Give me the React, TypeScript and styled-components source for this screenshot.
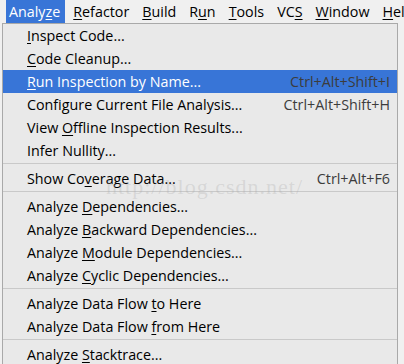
import React from 'react';
import styled, { createGlobalStyle } from 'styled-components';

const GlobalStyle = createGlobalStyle`
    body {
        margin: 0;
        background: #f0f0f0;
        font-family: "Open Sans", "Noto Sans", sans-serif;
    }
`

const Page = styled.div`
    position: relative;
    width: 404px;
    height: 364px;
    overflow: hidden;
    background: #f0f0f0;
`
const MenuBar = styled.div`
    display: flex;
    height: 23px;
    padding-left: 6px;
    font-size: 14.3px;
    color: #000;
`
const MenuTitle = styled.div<{ $active?: boolean }>`
    display: flex;
    align-items: center;
    padding: 0 5px 0 3px;
    margin-right: 5px;
    white-space: nowrap;
    background: ${p => p.$active ? '#3875d7' : 'transparent'};
    color: ${p => p.$active ? '#fff' : '#000'};
`
const Popup = styled.div`
    margin-left: 2px;
    width: 394px;
    border: 1px solid #a9a9a9;
    background: #e9e9e9;
    font-size: 14.3px;
`
const Item = styled.div<{ $selected?: boolean }>`
    display: flex;
    align-items: center;
    justify-content: space-between;
    height: 23px;
    padding: 0 7px 0 24px;
    white-space: nowrap;
    background: ${p => p.$selected ? '#3875d7' : 'transparent'};
    color: ${p => p.$selected ? '#fff' : '#000'};
`
const Shortcut = styled.span`
    color: #3c3c3c;
`
const Separator = styled.div`
    height: 4px;
    border-top: 1px solid #c9c9c9;
    margin-top: 1px;
    box-sizing: border-box;
`
const Mn = styled.span`
    text-decoration: underline;
    text-underline-offset: 2px;
`
const Watermark = styled.div`
    position: absolute;
    left: 106px;
    top: 174px;
    font-family: "Liberation Serif", serif;
    font-size: 22px;
    letter-spacing: 1px;
    color: rgba(170, 170, 170, 0.3);
    pointer-events: none;
`

type Entry = { pre: string, mn?: string, post?: string, shortcut?: string, selected?: boolean } | 'sep';

const entries: Entry[] = [
    { pre: '', mn: 'I', post: 'nspect Code...' },
    { pre: '', mn: 'C', post: 'ode Cleanup...' },
    { pre: '', mn: 'R', post: 'un Inspection by Name...', shortcut: 'Ctrl+Alt+Shift+I', selected: true },
    { pre: 'Configure Current File Analysis...', shortcut: 'Ctrl+Alt+Shift+H' },
    { pre: 'View ', mn: 'O', post: 'ffline Inspection Results...' },
    { pre: 'Infer Nullity...' },
    'sep',
    { pre: 'Show Co', mn: 'v', post: 'erage Data...', shortcut: 'Ctrl+Alt+F6' },
    'sep',
    { pre: 'Analyze ', mn: 'D', post: 'ependencies...' },
    { pre: 'Analyze ', mn: 'B', post: 'ackward Dependencies...' },
    { pre: 'Analyze ', mn: 'M', post: 'odule Dependencies...' },
    { pre: 'Analyze ', mn: 'C', post: 'yclic Dependencies...' },
    'sep',
    { pre: 'Analyze Data Flow ', mn: 't', post: 'o Here' },
    { pre: 'Analyze Data Flow ', mn: 'f', post: 'rom Here' },
    'sep',
    { pre: 'Analyze ', mn: 'S', post: 'tacktrace...' },
];

const menus: [string, string, string][] = [
    ['Analy', 'z', 'e'],
    ['', 'R', 'efactor'],
    ['', 'B', 'uild'],
    ['R', 'u', 'n'],
    ['', 'T', 'ools'],
    ['VC', 'S', ''],
    ['', 'W', 'indow'],
    ['', 'H', 'elp'],
];

const App: React.FC = () => {
    return (
        <Page>
            <GlobalStyle />
            <MenuBar>
                {menus.map(([a, m, b], i) => (
                    <MenuTitle key={i} $active={i === 0}>
                        {a}<Mn>{m}</Mn>{b}
                    </MenuTitle>
                ))}
            </MenuBar>
            <Popup>
                {entries.map((e, i) => e === 'sep'
                    ? <Separator key={i} />
                    : (
                        <Item key={i} $selected={e.selected}>
                            <span>{e.pre}{e.mn && <Mn>{e.mn}</Mn>}{e.post}</span>
                            {e.shortcut && <Shortcut>{e.shortcut}</Shortcut>}
                        </Item>
                    ))}
            </Popup>
            <Watermark>http://blog.csdn.net/</Watermark>
        </Page>
    );
}

export default App;
